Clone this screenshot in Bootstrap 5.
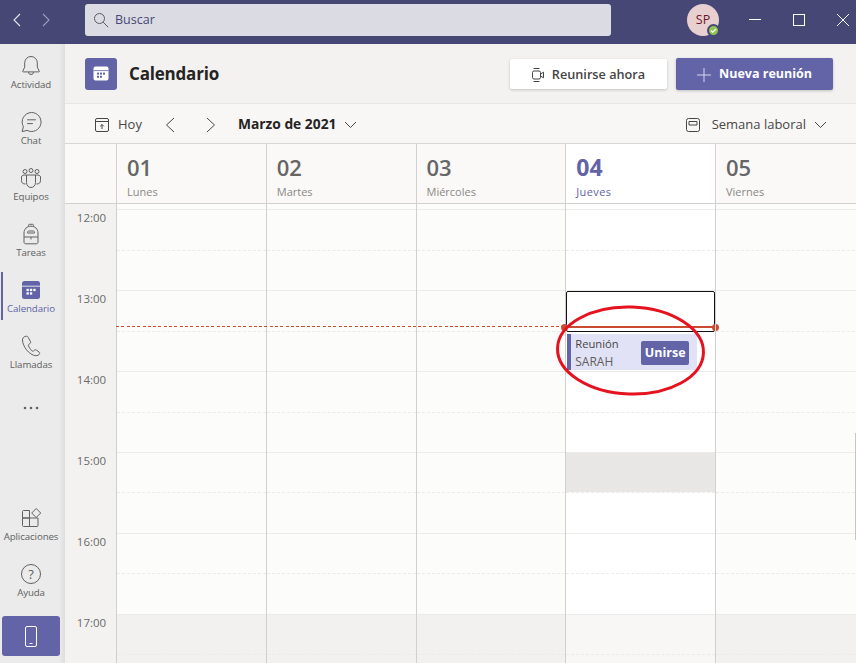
<!DOCTYPE html>
<html lang="es">
<head>
    <meta charset="UTF-8">
    <meta name="viewport" content="width=device-width, initial-scale=1.0">
    <title>Calendario</title>
    <link href="https://cdn.jsdelivr.net/npm/bootstrap@5.3.0/dist/css/bootstrap.min.css" rel="stylesheet">
    <style>
        :root {
            --teams: #6264a7;
            --teams-dark: #464775;
            --grid-line: #d2d0ce;
            --soft-line: #edebe9;
        }

        html, body { height: 100%; }

        body {
            font-family: "Open Sans", "Noto Sans", sans-serif;
            background: #f3f2f1;
            color: #252423;
            overflow: hidden;
        }

        .app-shell { height: 663px; }

        /* barra superior */
        .top-bar { height: 44px; padding-bottom: 4px; background: var(--teams-dark); flex: none; }
        .arrow-box { width: 85px; padding-left: 11px; gap: 17px; }
        .search-box {
            width: 526px; height: 32px; background: #dbdbe3; border-radius: 3px;
            padding-left: 8px; gap: 6px; color: #464775; font-size: 12.5px;
        }
        .avatar-box {
            width: 32px; height: 32px; border-radius: 50%; background: #e9d0d0;
            color: #6b1427; font-size: 12.5px; font-weight: 500; margin-left: 76px;
        }
        .status-dot {
            position: absolute; right: -1px; bottom: -1px; width: 13px; height: 13px;
            border-radius: 50%; background: #92c353; border: 2px solid #464775;
        }
        .window-btns { margin-left: 30px; gap: 32px; }

        /* menu lateral */
        .side-menu {
            width: 65px; background: #ebebeb; padding: 4px 3px 7px 0; gap: 8px;
            box-shadow: inset -7px 0 6px -6px rgba(0,0,0,.09);
        }
        .side-item {
            height: 48px; padding-top: 7px; color: #616161; font-size: 9.7px;
            line-height: 12px; position: relative; letter-spacing: -.1px; white-space: nowrap;
        }
        .side-item svg { display: block; margin-bottom: 2px; }
        .side-item.is-active { color: var(--teams); }
        .side-item.is-active::before {
            content: ""; position: absolute; left: 1px; top: 0; bottom: 0; width: 2px; background: var(--teams);
        }
        .side-dots { height: 48px; color: #616161; }
        .phone-tile {
            width: 58px; height: 40px; background: var(--teams); border-radius: 3px;
            margin: 4px 0 0 2px;
        }

        /* cabecera */
        .page-head {
            height: 60px; padding: 0 23px 0 20px; border-bottom: 1px solid #e8e6e4; flex: none;
        }
        .head-tile {
            width: 32px; height: 32px; background: var(--teams); border-radius: 3px; margin-right: 12px;
        }
        .head-title { font-size: 17px; font-weight: 700; letter-spacing: -.2px; margin: 0; padding-top: 2px; }
        .btn-now, .btn-new {
            width: 157px; font-size: 12.7px; font-weight: 600; border-radius: 2px; border: 0;
            padding: 2px 0 0; gap: 8px; box-shadow: 0 1px 3px rgba(0,0,0,.2);
        }
        .btn-now { height: 30px; background: #fff; color: #444; }
        .btn-new { height: 32px; background: var(--teams); color: #fff; font-weight: 700; margin-left: 9px; font-size: 12.5px; }

        /* barra de fecha */
        .date-bar {
            height: 40px; padding: 2px 29px 0 30px; background: #f8f7f6;
            border-bottom: 1px solid #d9d7d5; font-size: 13px; color: #484644; flex: none;
        }
        .date-month { font-weight: 700; color: #252423; font-size: 13.8px; }

        /* rejilla */
        .day-grid { display: grid; grid-template-columns: 51px repeat(5, 149.75px); }
        .day-heads { height: 60px; background: #faf9f8; border-bottom: 1px solid var(--grid-line); flex: none; }
        .day-head { border-left: 1px solid var(--grid-line); padding: 8px 0 0 10px; color: #8a8886; font-size: 11px; line-height: 14px; }
        .day-num { font-size: 22px; font-weight: 600; line-height: 31px; color: #666; margin-bottom: 2px; }
        .day-head.is-today { background: #fff; color: var(--teams); font-weight: 500; letter-spacing: .4px; }
        .day-head.is-today .day-num { color: var(--teams); font-weight: 700; font-size: 23px; letter-spacing: 0; }

        .hours-grid { flex: 1; min-height: 0; overflow: hidden; background: #fcfcfb; }
        .time-col { background: #f3f2f1; padding-top: 5.4px; }
        .time-cell { height: 80.9px; padding-top: 2px; text-align: center; padding-left: 2px; color: #6b6a68; font-size: 11.5px; line-height: 14px; }
        .day-col { border-left: 1px solid var(--grid-line); padding-top: 5.4px; position: relative; }
        .day-col.is-today { background: #fff; }
        .slot { height: 40.45px; border-top: 1px solid var(--soft-line); }
        .slot.half { border-top-style: dashed; }
        .slot.off { background: #f2f1ef; }
        .is-today .slot.off { background: #f8f7f6; }
        .slot.busy { background: #e8e7e5; }

        /* lo que va encima de la rejilla */
        .pick-box {
            position: absolute; left: 0; top: 87px; width: 149px; height: 41px;
            border: 1px solid #111; border-radius: 2px;
        }
        .now-dash {
            position: absolute; left: 51px; right: 291px; top: 122px; height: 1px;
            background: repeating-linear-gradient(90deg, #cc4a31 0 3px, transparent 3px 5.3px);
        }
        .now-line { position: absolute; left: -1px; width: 150px; top: 122px; height: 2px; background: #cc4a31; }
        .now-dot { position: absolute; width: 7px; height: 7px; border-radius: 50%; background: #cc4a31; top: 119.5px; }
        .event-box {
            position: absolute; left: 1px; top: 130px; width: 130px; height: 36px;
            background: #e2e2f6; border-left: 4px solid var(--teams); padding: 1px 8px 0 4px;
        }
        .event-text { font-size: 11.2px; font-weight: 500; line-height: 18px; color: #484644; }
        .event-text span { display: block; color: #605e5c; font-size: 12px; font-weight: 400; }
        .btn-join {
            width: 48px; height: 24px; padding: 0; border: 0; border-radius: 2px; background: var(--teams);
            color: #fff; font-size: 12.5px; font-weight: 700; line-height: 24px;
        }
        .mark-ring { position: absolute; left: 0; top: 0; pointer-events: none; }
        .scroll-thumb { position: absolute; right: 0; top: 229px; width: 1px; height: 107px; background: #c8c6c4; }
    </style>
</head>
<body>

<div class="app-shell d-flex flex-column position-relative">

    <!-- barra superior -->
    <div class="top-bar d-flex align-items-center">
        <div class="arrow-box d-flex align-items-center">
            <svg width="12" height="14" viewBox="0 0 12 14" fill="none" stroke="#e6e6ef" stroke-width="1.1"><path d="M9 1 3 7l6 6"/></svg>
            <svg width="12" height="14" viewBox="0 0 12 14" fill="none" stroke="#9a9bc0" stroke-width="1.1"><path d="m3 1 6 6-6 6"/></svg>
        </div>
        <div class="search-box d-flex align-items-center">
            <svg width="16" height="16" viewBox="0 0 16 16" fill="none" stroke="#5c5c5c" stroke-width="1"><circle cx="6.5" cy="6.5" r="5"/><path d="m10.2 10.2 5 5"/></svg>
            <span>Buscar</span>
        </div>
        <div class="avatar-box position-relative d-flex align-items-center justify-content-center">
            SP
            <span class="status-dot d-flex align-items-center justify-content-center">
                <svg width="7" height="7" viewBox="0 0 7 7" fill="none" stroke="#fff" stroke-width="1.2"><path d="m1 3.6 1.7 1.6L6 2"/></svg>
            </span>
        </div>
        <div class="window-btns d-flex align-items-center">
            <svg width="12" height="12" viewBox="0 0 12 12" fill="none" stroke="#fff"><path d="M0 5.5h12"/></svg>
            <svg width="12" height="12" viewBox="0 0 12 12" fill="none" stroke="#fff"><rect x=".5" y=".5" width="11" height="11"/></svg>
            <svg width="12" height="12" viewBox="0 0 12 12" fill="none" stroke="#fff"><path d="m0 0 12 12M12 0 0 12"/></svg>
        </div>
    </div>

    <div class="d-flex flex-grow-1" style="min-height:0">

        <!-- menu lateral -->
        <div class="side-menu d-flex flex-column flex-shrink-0">
            <div class="side-item d-flex flex-column align-items-center">
                <svg width="22" height="22" viewBox="0 0 22 22" fill="none" stroke="#616161"><path d="M11 1.5a6.3 6.3 0 0 0-6.3 6.3v4.4L2.8 16a.6.6 0 0 0 .5.9h15.4a.6.6 0 0 0 .5-.9l-1.9-3.8V7.8A6.3 6.3 0 0 0 11 1.5z"/><path d="M8.5 17a2.5 2.5 0 0 0 5 0"/></svg>
                Actividad
            </div>
            <div class="side-item d-flex flex-column align-items-center">
                <svg width="22" height="22" viewBox="0 0 22 22" fill="none" stroke="#616161"><path d="M11.5 1.5a9.5 9.5 0 1 1-4.4 17.9l-5 1.2 1.3-4.9A9.5 9.5 0 0 1 11.5 1.5z"/><path d="M7.5 8.8h8M7.5 12.6h5" stroke-linecap="round"/></svg>
                Chat
            </div>
            <div class="side-item d-flex flex-column align-items-center">
                <svg width="22" height="22" viewBox="0 0 22 22" fill="none" stroke="#616161"><circle cx="5" cy="4.5" r="2"/><circle cx="11" cy="3.5" r="2"/><circle cx="17" cy="4.5" r="2"/><path d="M6.5 8H6C3 8 1.500 8.500 1.500 10v3.500C1.500 16 3 17 5.500 17"/><path d="M15.500 8H16c3 0 4.500.5 4.500 2v3.500c0 2.500-1.500 3.500-4 3.500"/><path d="M6.500 8h9v7.500c0 3-2 5-4.500 5s-4.500-2-4.500-5z"/></svg>
                Equipos
            </div>
            <div class="side-item d-flex flex-column align-items-center">
                <svg width="22" height="22" viewBox="0 0 22 22" fill="none" stroke="#616161"><path d="M8.500 3.500V2.300c0-.7.5-1 1-1h3c.5 0 1 .3 1 1v1.200"/><path d="M11 3.200c-4 0-7 2.800-7 6.800v9.200c0 1 .8 1.600 1.600 1.600h10.800c.8 0 1.600-.6 1.600-1.600V10c0-4-3-6.800-7-6.800z"/><path d="M4 14h14M11 14v2.500M7.500 9.500c0-1 .5-1.500 1.200-1.500h4.600c.7 0 1.200.5 1.200 1.500v.5h-7z"/></svg>
                Tareas
            </div>
            <div class="side-item is-active d-flex flex-column align-items-center">
                <svg width="22" height="22" viewBox="0 0 22 22"><rect x="2" y="2" width="18" height="18" rx="2.500" fill="#6264a7"/><path d="M2 7.200h18" stroke="#fff" stroke-width=".8"/><g fill="#fff"><rect x="6.500" y="9.800" width="2.300" height="2.300"/><rect x="9.900" y="9.800" width="2.300" height="2.300"/><rect x="13.300" y="9.800" width="2.300" height="2.300"/><rect x="6.500" y="13.300" width="2.300" height="2.300"/><rect x="9.900" y="13.300" width="2.300" height="2.300"/></g></svg>
                Calendario
            </div>
            <div class="side-item d-flex flex-column align-items-center">
                <svg width="22" height="22" viewBox="0 0 22 22" fill="none" stroke="#616161"><path d="M4.800 1.500c-1.500.6-2.300 2-2.300 3.500 0 3 1.500 6.500 4 9.800 2.400 3.100 6 5.700 9.300 5.900 1.700.1 3-.6 3.700-1.800.4-.7.200-1.300-.4-1.800l-2.800-2.100c-.6-.4-1.200-.3-1.800.1l-1.100.9c-.5.300-1 .3-1.400-.1-1.400-1.300-2.900-3.500-3.600-5.300-.2-.6 0-1 .5-1.300l1-.7c.7-.5.9-1.100.7-1.800L8.300 2.500C8 1.500 7 1.100 6.200 1.200z"/></svg>
                Llamadas
            </div>
            <div class="side-dots d-flex align-items-center justify-content-center">
                <svg width="16" height="4" viewBox="0 0 16 4" fill="#616161"><circle cx="2" cy="2" r="1.300"/><circle cx="8" cy="2" r="1.300"/><circle cx="14" cy="2" r="1.300"/></svg>
            </div>

            <div class="side-item d-flex flex-column align-items-center mt-auto">
                <svg width="22" height="22" viewBox="0 0 22 22" fill="none" stroke="#616161"><path d="M2.500 4.500c0-.6.4-1 1-1h6v7.500h-7zM2.500 11h7v8.500h-6c-.6 0-1-.4-1-1zM9.500 11h8.500v7.500c0 .6-.4 1-1 1H9.500z"/><path d="m16.200 1.500 4.500 4.500-4.500 4.500L11.700 6z"/></svg>
                Aplicaciones
            </div>
            <div class="side-item d-flex flex-column align-items-center">
                <svg width="22" height="22" viewBox="0 0 22 22" fill="none" stroke="#616161"><circle cx="11" cy="11" r="9.500"/><text x="11" y="15.500" text-anchor="middle" font-size="13" fill="#616161" stroke="none" font-family="Open Sans, sans-serif">?</text></svg>
                Ayuda
            </div>
            <div class="phone-tile d-flex align-items-center justify-content-center">
                <svg width="14" height="21" viewBox="0 0 14 21" fill="none" stroke="#fff"><rect x="1.500" y=".5" width="11" height="20" rx="1.500"/><path d="M5.500 17.500h3"/></svg>
            </div>
        </div>

        <!-- contenido -->
        <div class="flex-grow-1 d-flex flex-column position-relative" style="min-width:0">

            <div class="page-head d-flex align-items-center">
                <div class="head-tile d-flex align-items-center justify-content-center">
                    <svg width="16" height="15" viewBox="0 0 16 15"><rect x=".5" y=".5" width="15" height="14" rx="2" fill="#fff"/><path d="M.5 4.600h15" stroke="#6264a7" stroke-width=".8"/><g fill="#6264a7"><rect x="4" y="6.600" width="2" height="2"/><rect x="7" y="6.600" width="2" height="2"/><rect x="10" y="6.600" width="2" height="2"/><rect x="4" y="9.800" width="2" height="2"/><rect x="7" y="9.800" width="2" height="2"/></g></svg>
                </div>
                <h1 class="head-title">Calendario</h1>
                <button class="btn btn-now d-flex align-items-center justify-content-center ms-auto" type="button">
                    <svg width="12" height="16" viewBox="0 0 12 16" fill="none" stroke="#444"><rect x=".5" y="4" width="8" height="8" rx="1.500"/><path d="m8.500 7 3-1.800v5.600l-3-1.800M1.500 1.500h6M1.500 14.500h6"/></svg>
                    Reunirse ahora
                </button>
                <button class="btn btn-new d-flex align-items-center justify-content-center" type="button">
                    <svg width="14" height="14" viewBox="0 0 14 14" fill="none" stroke="#d6d6ea"><path d="M7 0v14M0 7h14"/></svg>
                    Nueva reunión
                </button>
            </div>

            <div class="date-bar d-flex align-items-center">
                <svg width="14" height="14" viewBox="0 0 14 14" fill="none" stroke="#484644"><rect x=".5" y=".5" width="13" height="13" rx="1.500"/><path d="M.5 3.500h13M7 11V6.500M5.200 8.300 7 6.500l1.800 1.800"/></svg>
                <span style="margin-left:9px">Hoy</span>
                <svg style="margin-left:23px" width="10" height="16" viewBox="0 0 10 16" fill="none" stroke="#484644"><path d="M9 1 1.500 8 9 15"/></svg>
                <svg style="margin-left:31px" width="10" height="16" viewBox="0 0 10 16" fill="none" stroke="#484644"><path d="M1 1l7.500 7L1 15"/></svg>
                <span class="date-month" style="margin-left:22px">Marzo de 2021</span>
                <svg class="ms-2" width="13" height="8" viewBox="0 0 13 8" fill="none" stroke="#484644"><path d="m1 1 5.500 5.500L12 1"/></svg>
                <svg class="ms-auto" width="14" height="14" viewBox="0 0 14 14" fill="none" stroke="#484644"><rect x=".5" y=".5" width="13" height="13" rx="2"/><path d="M3 3.500h8v3.500H3z"/></svg>
                <span class="ms-2 ps-1">Semana laboral</span>
                <svg class="ms-2" width="13" height="8" viewBox="0 0 13 8" fill="none" stroke="#484644"><path d="m1 1 5.500 5.500L12 1"/></svg>
            </div>

            <div class="day-grid day-heads">
                <div></div>
                <div class="day-head"><div class="day-num">01</div>Lunes</div>
                <div class="day-head"><div class="day-num">02</div>Martes</div>
                <div class="day-head"><div class="day-num">03</div>Miércoles</div>
                <div class="day-head is-today"><div class="day-num">04</div>Jueves</div>
                <div class="day-head"><div class="day-num">05</div>Viernes</div>
            </div>

            <div class="day-grid hours-grid position-relative" id="hoursGrid">
                <div class="time-col" id="timeCol"></div>
                <div class="day-col" data-day="1"></div>
                <div class="day-col" data-day="2"></div>
                <div class="day-col" data-day="3"></div>
                <div class="day-col is-today" data-day="4" id="todayCol"></div>
                <div class="day-col" data-day="5"></div>
                <div class="now-dash"></div>
                <div class="scroll-thumb"></div>
            </div>
        </div>
    </div>

    <!-- marca roja dibujada sobre la captura -->
    <svg class="mark-ring" width="856" height="663" viewBox="0 0 856 663" fill="none">
        <ellipse cx="630.500" cy="350.500" rx="73" ry="43.500" stroke="#e5121f" stroke-width="3" transform="rotate(2 630.500 350.500)"/>
    </svg>
</div>

<script>
// filas de la rejilla: 12:00 a 17:30, cada media hora
const hours = [12, 13, 14, 15, 16, 17];

document.getElementById('timeCol').innerHTML = hours
    .map(h => `<div class="time-cell">${h}:00</div>`)
    .join('');

document.querySelectorAll('.day-col').forEach(col => {
    let html = '';
    hours.forEach(h => {
        const off = h === 17 ? ' off' : '';
        const busy = (h === 15 && col.dataset.day === '4') ? ' busy' : '';
        html += `<div class="slot${off}${busy}"></div>`;
        html += `<div class="slot half${off}"></div>`;
    });
    col.innerHTML = html;
});

// lo que va encima de la columna de hoy
document.getElementById('todayCol').insertAdjacentHTML('beforeend', `
    <div class="pick-box"></div>
    <div class="now-line"></div>
    <div class="now-dot" style="left:-5px"></div>
    <div class="now-dot" style="left:146px"></div>
    <div class="event-box d-flex align-items-center justify-content-between">
        <div class="event-text">Reunión<span>SARAH</span></div>
        <button class="btn btn-join" type="button">Unirse</button>
    </div>`);
</script>

<script src="https://cdn.jsdelivr.net/npm/bootstrap@5.3.0/dist/js/bootstrap.bundle.min.js"></script>
</body>
</html>
